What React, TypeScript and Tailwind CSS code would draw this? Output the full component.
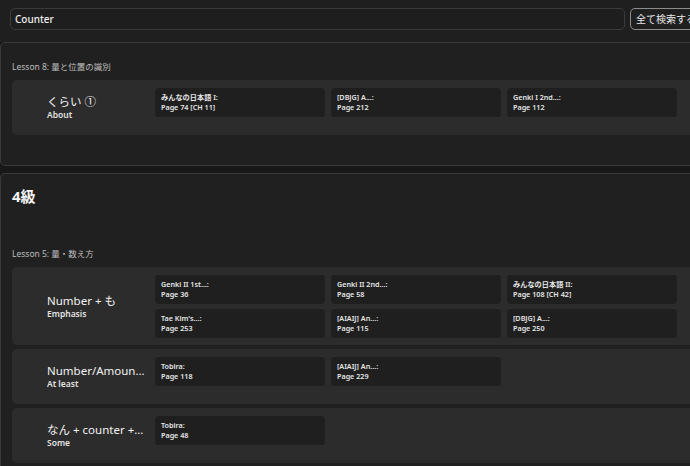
import React from "react";

type Ref = { book: string; page: string };
type Grammar = { title: string; meaning: string; refs: Ref[] };

const font = { fontFamily: '"Noto Sans", "Noto Sans CJK JP", sans-serif' };

function GrammarCard({ item }: { item: Grammar }) {
  return (
    <div className="flex min-h-[55px] rounded-[5px] bg-[#2c2c2c] pr-6">
      <div className="flex w-[143px] shrink-0 flex-col justify-center pl-[35px] pr-[10px]">
        <div className="truncate text-[11.5px] leading-[14px] text-[#f2f2f2]">{item.title}</div>
        <div className="text-[8.5px] font-semibold leading-[11px] text-[#e2e2e2]">{item.meaning}</div>
      </div>
      <div className="grid shrink-0 grid-cols-[170px_170px_170px] content-start gap-x-[6px] gap-y-[5px] pb-[7px] pt-[8px]">
        {item.refs.map((r, i) => (
          <div key={i} className="h-[29px] rounded-[4px] bg-[#1f1f1f] px-[6px] pt-[4px] text-[7.2px] font-semibold leading-[10px] text-[#e6e6e6]">
            <div>{r.book}</div>
            <div>{r.page}</div>
          </div>
        ))}
      </div>
    </div>
  );
}

function LessonLabel({ children }: { children: React.ReactNode }) {
  return <div className="mb-[7px] text-[8.5px] leading-[12px] text-[#bdbdbd]">{children}</div>;
}

export default function App() {
  const n5: Grammar = {
    title: "くらい ①",
    meaning: "About",
    refs: [
      { book: "みんなの日本語 I:", page: "Page 74 [CH 11]" },
      { book: "[DBJG] A...:", page: "Page 212" },
      { book: "Genki I 2nd...:", page: "Page 112" },
    ],
  };
  const n4: Grammar[] = [
    {
      title: "Number + も",
      meaning: "Emphasis",
      refs: [
        { book: "Genki II 1st...:", page: "Page 36" },
        { book: "Genki II 2nd...:", page: "Page 58" },
        { book: "みんなの日本語 II:", page: "Page 108 [CH 42]" },
        { book: "Tae Kim's...:", page: "Page 253" },
        { book: "[AIAIJ] An...:", page: "Page 115" },
        { book: "[DBJG] A...:", page: "Page 250" },
      ],
    },
    {
      title: "Number/Amount + は",
      meaning: "At least",
      refs: [
        { book: "Tobira:", page: "Page 118" },
        { book: "[AIAIJ] An...:", page: "Page 229" },
      ],
    },
    {
      title: "なん + counter + か",
      meaning: "Some",
      refs: [{ book: "Tobira:", page: "Page 48" }],
    },
  ];

  return (
    <div className="h-[466px] w-[690px] overflow-hidden bg-[#181818]" style={font}>
      <div className="w-[712px]">
        <div className="flex gap-[5px] bg-[#1f1f1f] px-[10px] pb-[12px] pt-[8px]">
          <div className="flex h-[22px] w-[615px] items-center rounded-[5px] border border-[#3a3a3a] bg-[#1e1e1e] px-[4px] text-[10px] font-medium text-[#f0f0f0]">
            Counter
          </div>
          <button className="h-[22px] rounded-[5px] border border-[#8c8c8c] px-[5px] text-[10px] text-[#e8e8e8]">
            全て検索する
          </button>
        </div>

        <div className="rounded-[5px] border border-[#3a3a3a] bg-[#202020] pb-[30px] pl-[11px] pr-[12px] pt-[18px]">
          <LessonLabel>Lesson 8: 量と位置の識別</LessonLabel>
          <GrammarCard item={n5} />
        </div>

        <div className="mt-[7px] rounded-[5px] border border-[#3a3a3a] bg-[#202020] pb-4 pl-[11px] pr-[12px] pt-[11px]">
          <div className="text-[15px] font-bold leading-[22px] text-[#f4f4f4]">4級</div>
          <div className="pt-[41px]">
            <LessonLabel>Lesson 5: 量・数え方</LessonLabel>
            <div className="flex flex-col gap-[4px]">
              {n4.map((g, i) => (
                <GrammarCard key={i} item={g} />
              ))}
            </div>
          </div>
        </div>
      </div>
    </div>
  );
}
